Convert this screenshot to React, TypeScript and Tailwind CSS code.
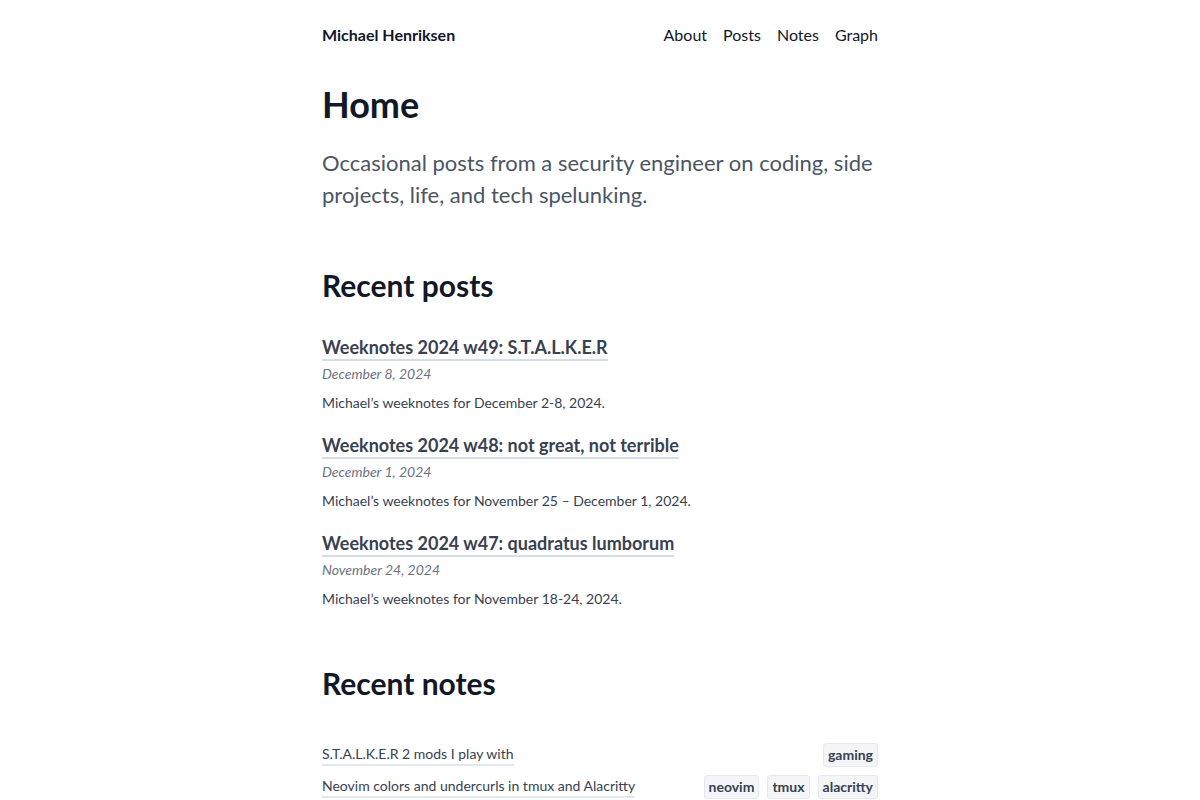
const POSTS = [
  {
    title: "Weeknotes 2024 w49: S.T.A.L.K.E.R",
    date: "December 8, 2024",
    summary: "Michael’s weeknotes for December 2-8, 2024.",
  },
  {
    title: "Weeknotes 2024 w48: not great, not terrible",
    date: "December 1, 2024",
    summary: "Michael’s weeknotes for November 25 – December 1, 2024.",
  },
  {
    title: "Weeknotes 2024 w47: quadratus lumborum",
    date: "November 24, 2024",
    summary: "Michael’s weeknotes for November 18-24, 2024.",
  },
];

const NOTES = [
  { title: "S.T.A.L.K.E.R 2 mods I play with", tags: ["gaming"] },
  { title: "Neovim colors and undercurls in tmux and Alacritty", tags: ["neovim", "tmux", "alacritty"] },
];

export default function App() {
  return (
    <div className="min-h-screen bg-white font-['Lato','Noto_Sans',sans-serif] text-[#0f172a]">
      <div className="mx-auto w-[556px]">
        <header className="flex items-center justify-between pt-[24px] pb-[36px] leading-[22px]">
          <a className="text-[16px] font-bold text-[#0f172a]">Michael Henriksen</a>
          <nav className="flex gap-4 text-[16px] text-[#0f172a]">
            <a>About</a>
            <a>Posts</a>
            <a>Notes</a>
            <a>Graph</a>
          </nav>
        </header>

        <h1 className="text-[36px] font-bold leading-[44px] text-[#111827]">Home</h1>
        <p className="mt-[21px] text-[22px] leading-[32px] text-[#4b5563]">
          Occasional posts from a security engineer on coding, side projects, life, and tech spelunking.
        </p>

        <h2 className="mt-[54px] text-[30px] font-bold leading-[40px] text-[#111827]">Recent posts</h2>
        <ul className="mt-[30px] flex flex-col gap-[19px]">
          {POSTS.map((p) => (
            <li key={p.title}>
              <a className="inline-block border-b-2 border-[#d5dde8] text-[18px] font-bold leading-[24px] text-[#374151]">
                {p.title}
              </a>
              <div className="mt-[2px] text-[14px] italic leading-[22px] text-[#6b7280]">{p.date}</div>
              <p className="mt-[7px] text-[14px] leading-[22px] text-[#374151]">{p.summary}</p>
            </li>
          ))}
        </ul>

        <h2 className="mt-[53px] text-[30px] font-bold leading-[40px] text-[#111827]">Recent notes</h2>
        <ul className="mt-[40px] flex flex-col gap-[8px]">
          {NOTES.map((n) => (
            <li key={n.title} className="flex items-center justify-between">
              <a className="border-b-2 border-[#e2e8f0] text-[14px] leading-[20px] text-[#374151]">{n.title}</a>
              <div className="flex gap-2">
                {n.tags.map((t) => (
                  <span
                    key={t}
                    className="rounded-[3px] border border-[#e5e9ef] bg-[#f3f5f8] px-[4px] text-[14px] font-bold leading-[22px] text-[#374151]"
                  >
                    {t}
                  </span>
                ))}
              </div>
            </li>
          ))}
        </ul>
      </div>
    </div>
  );
}
